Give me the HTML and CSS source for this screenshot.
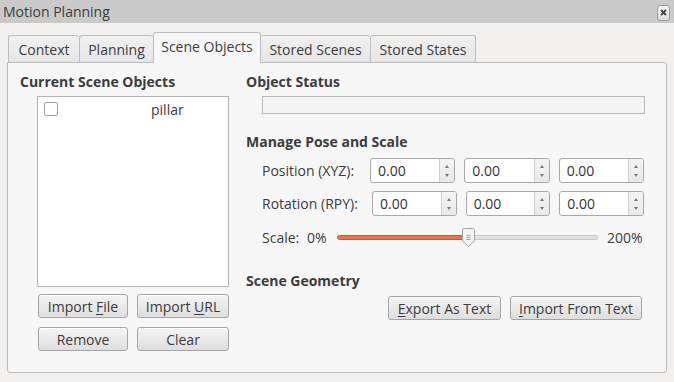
FILE: index.html
```html
<!DOCTYPE html>
<html>
<head>
<meta charset="utf-8">
<link rel="stylesheet" href="styles.css">
</head>
<body>
<div class="window">
  <div class="titlebar">
    <span class="title">Motion Planning</span>
    <span class="close"><svg width="7" height="7" viewBox="0 0 7 7"><path d="M1 1L6 6M6 1L1 6" stroke="#444" stroke-width="1.8"/></svg></span>
  </div>
  <div class="tabs">
    <div class="tab">Context</div>
    <div class="tab">Planning</div>
    <div class="tab active">Scene Objects</div>
    <div class="tab">Stored Scenes</div>
    <div class="tab">Stored States</div>
  </div>
  <div class="panel">
    <div class="left">
      <div class="heading">Current Scene Objects</div>
      <div class="list">
        <div class="item"><span class="check"></span><span class="item-name">pillar</span></div>
      </div>
      <div class="btnrow">
        <button class="btn w90">Import <u>F</u>ile</button>
        <button class="btn w92">Import <u>U</u>RL</button>
      </div>
      <div class="btnrow">
        <button class="btn w90">Remove</button>
        <button class="btn w92">Clear</button>
      </div>
    </div>
    <div class="right">
      <div class="heading">Object Status</div>
      <div class="status"></div>
      <div class="heading h2">Manage Pose and Scale</div>
      <div class="row r1">
        <span class="lbl l1">Position (XYZ):</span>
        <div class="spins">
          <div class="spin"><span class="val">0.00</span><span class="arrows"><i class="up"></i><i class="dn"></i></span></div>
          <div class="spin"><span class="val">0.00</span><span class="arrows"><i class="up"></i><i class="dn"></i></span></div>
          <div class="spin"><span class="val">0.00</span><span class="arrows"><i class="up"></i><i class="dn"></i></span></div>
        </div>
      </div>
      <div class="row r2">
        <span class="lbl l2">Rotation (RPY):</span>
        <div class="spins">
          <div class="spin"><span class="val">0.00</span><span class="arrows"><i class="up"></i><i class="dn"></i></span></div>
          <div class="spin"><span class="val">0.00</span><span class="arrows"><i class="up"></i><i class="dn"></i></span></div>
          <div class="spin"><span class="val">0.00</span><span class="arrows"><i class="up"></i><i class="dn"></i></span></div>
        </div>
      </div>
      <div class="scalerow">
        <span class="lbl sc">Scale:</span>
        <span class="lbl pct">0%</span>
        <div class="slider">
          <div class="fill"></div>
          <div class="groove"></div>
          <svg class="handle" width="13" height="19" viewBox="0 0 13 19"><path d="M2.5 0.5H10.5Q12.5 0.5 12.5 2.5V13L6.5 18.5L0.5 13V2.5Q0.5 0.5 2.5 0.5Z" fill="#f3f3f3" stroke="#a5a5a5"/><path d="M4.5 7.5H8.5M4.5 9.5H8.5M4.5 11.5H8.5" stroke="#a0a0a0" stroke-width="1"/></svg>
        </div>
        <span class="lbl pct2">200%</span>
      </div>
      <div class="heading h3">Scene Geometry</div>
      <div class="geo">
        <button class="btn w113"><u>E</u>xport As Text</button>
        <button class="btn w132"><u>I</u>mport From Text</button>
      </div>
    </div>
  </div>
</div>
</body>
</html>
```
FILE: styles.css
```css
* { box-sizing: border-box; }
html, body { margin: 0; padding: 0; }
body {
  width: 674px; height: 382px; overflow: hidden;
  background: #f2f1f0;
  font-family: "Open Sans", "Noto Sans", sans-serif;
  font-size: 14px;
  color: #3c3c3c;
}
.titlebar {
  height: 23px; background: #cacaca;
  display: flex; align-items: center; justify-content: space-between;
  padding: 0 4px 0 3px;
}
.title { font-size: 14px; color: #3c3c3c; }
.close {
  width: 13px; height: 16px; margin-top: 2px;
  border: 1px solid #9e9e9e; border-radius: 3px;
  background: linear-gradient(#f6f6f6, #dcdcdc);
  display: flex; align-items: center; justify-content: center;
}
.tabs {
  display: flex; align-items: flex-end;
  margin-top: 9px; padding-left: 8px; height: 30px;
  position: relative; z-index: 2;
}
.tab {
  height: 27px; padding: 0;
  display: flex; align-items: center; justify-content: center;
  border: 1px solid #bdbdbd; border-bottom: none; border-right: none;
  border-radius: 3px 3px 0 0;
  background: linear-gradient(#f0f0f0, #e6e6e6);
  color: #3c3c3c; font-size: 14px;
}
.tab:nth-child(1) { width: 71px; }
.tab:nth-child(2) { width: 74px; }
.tab:nth-child(3) { width: 108px; }
.tab:nth-child(4) { width: 109px; border-left: none; }
.tab:nth-child(5) { width: 106px; border-right: 1px solid #bdbdbd; }
.tab.active {
  height: 31px; margin-bottom: -1px;
  background: #f7f7f7;
  border-right: 1px solid #bdbdbd;
  padding-bottom: 3px;
}
.panel {
  margin: 0 7px; height: 311px;
  border: 1px solid #bcbcbc; border-radius: 0 3px 3px 3px;
  background: #f7f7f7;
  display: flex;
  position: relative; z-index: 1;
}
.heading { font-weight: bold; font-size: 14px; line-height: 16px; color: #3c3c3c; }
.left { width: 238px; padding: 11px 0 0 12px; }
.list {
  margin: 6px 0 0 17px; width: 192px; height: 191px;
  background: #fff; border: 1px solid #b4b4b4;
}
.item { display: flex; align-items: center; height: 18px; margin-top: 3px; padding-left: 6px; }
.check {
  width: 14px; height: 14px; border: 1px solid #9e9e9e; border-radius: 2px;
  background: #fff;
}
.item-name { margin-left: 93px; font-size: 14px; }
.btnrow { display: flex; gap: 9px; margin: 7px 0 0 18px; }
.btnrow + .btnrow { margin-top: 9px; }
.btn {
  height: 24px; padding: 0;
  font-family: inherit; font-size: 14px; color: #3c3c3c;
  border: 1px solid #a5a5a5; border-radius: 3px;
  background: linear-gradient(#f5f5f5, #dedede);
  box-shadow: inset 0 1px 0 #fff;
}
.btn u { text-decoration-thickness: 1px; text-underline-offset: 2px; }
.w90 { width: 90px; } .w92 { width: 92px; }
.w113 { width: 113px; } .w132 { width: 132px; }
.right { flex: 1; padding: 11px 0 0 0; }
.status {
  margin: 6px 0 0 16px; width: 383px; height: 18px;
  border: 1px solid #bcbcbc; background: #f4f4f4;
}
.h2 { margin-top: 20px; }
.row { display: flex; align-items: center; margin-left: 16px; width: 382px; }
.r1 { margin-top: 8px; }
.r2 { margin-top: 8px; }
.lbl { font-size: 14px; white-space: nowrap; }
.l1 { width: 108px; }
.l2 { width: 110px; }
.spins { flex: 1; display: flex; gap: 9px; }
.spin {
  flex: 1; height: 25px; display: flex;
  border: 1px solid #a8a8a8; border-radius: 3px; background: #fff;
  overflow: hidden;
}
.val { flex: 1; padding-left: 7px; display: flex; align-items: center; font-size: 14px; color: #333; }
.arrows {
  width: 15px; border-left: 1px solid #cfcfcf;
  background: linear-gradient(#f4f4f4, #e9e9e9);
  display: flex; flex-direction: column; align-items: center; justify-content: center; gap: 6px;
}
.arrows i { display: block; width: 0; height: 0; border-left: 2.5px solid transparent; border-right: 2.5px solid transparent; }
.up { border-bottom: 3px solid #777; }
.dn { border-top: 3px solid #777; }
.scalerow { display: flex; align-items: center; margin: 10px 0 0 16px; width: 382px; height: 22px; }
.sc { width: 45px; }
.pct { width: 30px; }
.slider { position: relative; width: 261px; height: 19px; display: flex; align-items: center; }
.fill { width: 131px; height: 5px; background: #ee7446; border: 1px solid #c8572c; border-radius: 3px 0 0 3px; }
.groove { flex: 1; height: 5px; background: #e2e2e2; border: 1px solid #c6c6c6; border-left: none; border-radius: 0 3px 3px 0; }
.handle { position: absolute; left: 125px; top: 0; }
.pct2 { margin-left: 9px; }
.h3 { margin-top: 25px; }
.geo { display: flex; gap: 9px; margin: 7px 0 0 142px; }
```
